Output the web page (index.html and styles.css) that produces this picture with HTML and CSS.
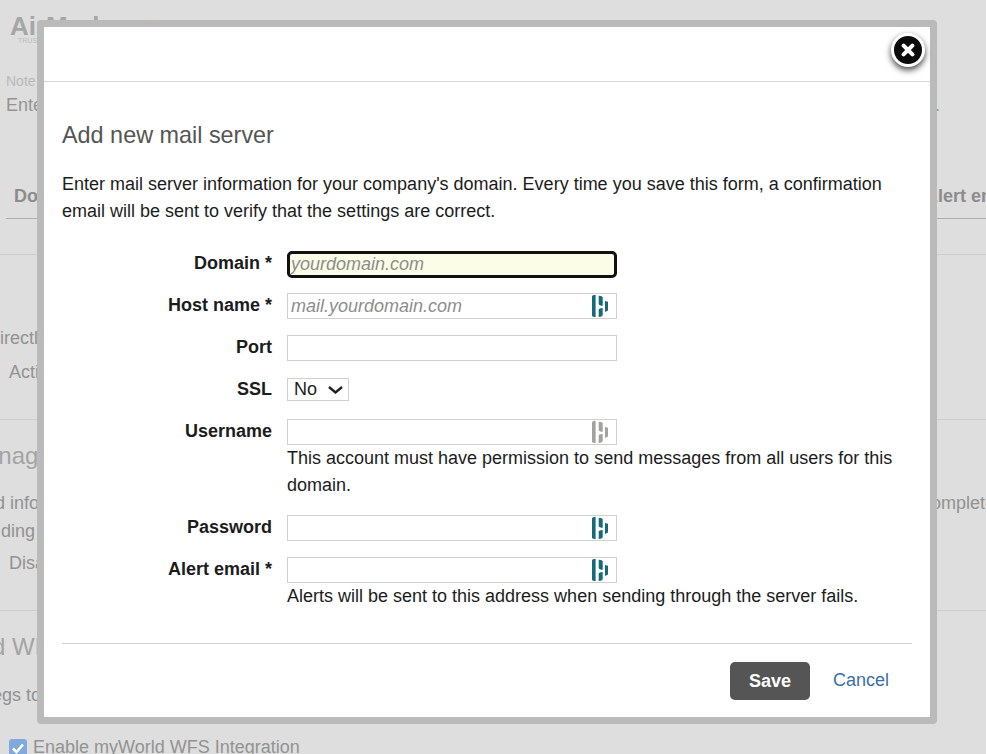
FILE: index.html
```html
<!DOCTYPE html>
<html lang="en">
<head>
<meta charset="utf-8">
<title>Add new mail server</title>
<link rel="stylesheet" href="styles.css">
</head>
<body>
<svg class="defs" width="0" height="0" aria-hidden="true">
  <symbol id="dash" viewBox="0 0 18 24">
    <path d="M2 2.5 C2 1.6 2.7 1 5.6 1 V23 C2.7 23 2 22.4 2 21.5 Z"/>
    <path d="M8.7 1.8 C11.4 2 12.7 2.6 12.7 3.6 V11.8 C10.8 11.8 8.7 11.2 8.7 10 Z"/>
    <path d="M8.7 15 C10 14.4 11.4 14 12.7 14 V21 C12.7 22.2 11.4 22.8 8.7 23 Z"/>
    <path d="M15 7 L18 7.8 V16.6 L15 18 Z"/>
  </symbol>
</svg>

<div class="page">
  <div class="logo"><span class="logo-name">AirMark</span><span class="logo-leaf"></span><div class="logo-sub">TRUSTED</div></div>
  <div class="note">Note</div>
  <p class="intro"><span>Enter the mail servers for your company's domains so that messages are sent through them directly</span><span>.</span></p>
  <div class="table-head"><span>Domain</span><span>Alert email</span></div>
  <div class="rule-head"></div>
  <div class="rule rule-a"></div>
  <p class="direct">directly</p>
  <p class="indent act">Active</p>
  <div class="rule rule-b"></div>
  <h2 class="h-mgmt">Manage</h2>
  <div class="info-row"><span>d info</span><span>complete</span></div>
  <p class="ding">ding</p>
  <p class="indent dis">Disabled</p>
  <div class="rule rule-c"></div>
  <h2 class="h-wfs">d WFS</h2>
  <p class="egs">egs to</p>
  <div class="check-row">
    <span class="checkbox"><svg viewBox="0 0 18 18" width="18" height="18"><path d="M4 9.5 L7.5 13 L14 5.5" fill="none" stroke="#fff" stroke-width="2.6"/></svg></span>
    <span>Enable myWorld WFS Integration</span>
  </div>
</div>

<div class="overlay">
  <div class="dialog" role="dialog" aria-label="Add new mail server">
    <button class="close" type="button" aria-label="Close">
      <svg viewBox="0 0 14 14" width="14" height="14"><path d="M2.6 2.6 L11.4 11.4 M11.4 2.6 L2.6 11.4" stroke="#fff" stroke-width="4" stroke-linecap="round"/></svg>
    </button>
    <div class="dialog-top"></div>
    <div class="dialog-body">
      <h1>Add new mail server</h1>
      <p class="lead">Enter mail server information for your company's domain. Every time you save this form, a confirmation email will be sent to verify that the settings are correct.</p>
      <form class="form">
        <div class="row">
          <label class="lab" for="f-domain">Domain *</label>
          <div class="ctl"><input id="f-domain" class="field field-focus" placeholder="yourdomain.com"></div>
        </div>
        <div class="row">
          <label class="lab" for="f-host">Host name *</label>
          <div class="ctl"><div class="wrap"><input id="f-host" class="field" placeholder="mail.yourdomain.com"><svg class="dash"><use href="#dash"/></svg></div></div>
        </div>
        <div class="row">
          <label class="lab" for="f-port">Port</label>
          <div class="ctl"><input id="f-port" class="field"></div>
        </div>
        <div class="row">
          <label class="lab" for="f-ssl">SSL</label>
          <div class="ctl"><select id="f-ssl" class="sel"><option>No</option><option>Yes</option></select></div>
        </div>
        <div class="row row-help">
          <label class="lab" for="f-user">Username</label>
          <div class="ctl"><div class="wrap"><input id="f-user" class="field"><svg class="dash dash-grey"><use href="#dash"/></svg></div>
            <p class="help">This account must have permission to send messages from all users for this domain.</p></div>
        </div>
        <div class="row">
          <label class="lab" for="f-pass">Password</label>
          <div class="ctl"><div class="wrap"><input id="f-pass" class="field" type="password"><svg class="dash"><use href="#dash"/></svg></div></div>
        </div>
        <div class="row row-help">
          <label class="lab" for="f-alert">Alert email *</label>
          <div class="ctl"><div class="wrap"><input id="f-alert" class="field"><svg class="dash"><use href="#dash"/></svg></div>
            <p class="help">Alerts will be sent to this address when sending through the server fails.</p></div>
        </div>
      </form>
      <div class="actions">
        <button class="save" type="button">Save</button>
        <a class="cancel" href="#">Cancel</a>
      </div>
    </div>
  </div>
</div>
</body>
</html>
```

FILE: styles.css
```css
* { box-sizing: border-box; }
html, body { margin: 0; height: 100%; }
body {
  background: #dedede;
  color: #929292;
  font: 18px/27px "Liberation Sans", Arial, sans-serif;
  overflow: hidden;
}
.defs { display: block; height: 0; }
p, h1, h2 { margin: 0; font-weight: 400; }

/* dimmed page behind the dialog */
.page { height: 754px; overflow: hidden; padding-top: 14px; white-space: nowrap; }
.logo { height: 50px; padding-left: 10px; position: relative; }
.logo-name { font-size: 26px; line-height: 24px; font-weight: 700; color: #a6a6a6; display: block; }
.logo-leaf { position: absolute; left: 143px; top: 3px; width: 12px; height: 6px; border-radius: 6px 6px 0 0; background: #dfdfcc; }
.logo-sub { font-size: 7px; line-height: 8px; color: #bcbcbc; padding-left: 8px; margin-top: -1px; }
.note { margin: 9px 0 0 6px; font-size: 14px; line-height: 16px; color: #b9b9b9; }
.intro { margin: 3px 0 0 6px; width: 934px; height: 27px; display: flex; justify-content: space-between; overflow: hidden; color: #959595; }
.intro span:first-child { width: 800px; overflow: hidden; }
.table-head { margin: 64px 0 0 14px; display: flex; justify-content: space-between; font-weight: 700; width: 1010px; color: #8c8c8c; }
.table-head span:last-child { width: 99px; }
.rule-head { height: 1px; margin: 8px 0 0 6px; background: #aeaeae; }
.rule { height: 1px; background: #cdcdcd; }
.rule-a { margin-top: 35px; }
.direct { margin: 70px 0 0 -10px; }
.indent { margin-left: 9px; }
.act { margin-top: 7px; }
.rule-b { margin-top: 33px; }
h2 { font-size: 24px; line-height: 32px; color: #a4a4a4; }
.h-mgmt { margin: 20px 0 0 -35px; }
.info-row { margin: 18px 0 0 -5px; width: 1052px; display: flex; justify-content: space-between; }
.info-row span:last-child { width: 125px; }
.ding { margin: 1px 0 0 1px; }
.dis { margin-top: 5px; }
.rule-c { margin-top: 33px; }
.h-wfs { margin: 20px 0 0 -8px; }
.egs { margin: 19px 0 0 -8px; }
.check-row { margin-top: 25px; margin-left: 9px; display: flex; align-items: center; gap: 6px; }
.checkbox { width: 18px; height: 18px; border-radius: 3px; background: #80a9dd; display: block; line-height: 0; }

/* modal */
.overlay { position: fixed; inset: 0; }
.dialog {
  position: absolute;
  left: 37px; top: 20px;
  width: 900px; height: 704px;
  background: #fff;
  border: 7px solid #bababa;
  border-radius: 4px;
  color: #1c1c1c;
}
.close {
  position: absolute;
  right: 5px; top: 6px;
  width: 34px; height: 34px;
  padding: 0;
  display: flex; align-items: center; justify-content: center;
  border: 3px solid #fff;
  border-radius: 50%;
  background: #0b0b0b;
  box-shadow: 0 3px 6px 0 #444;
}
.dialog-top { height: 55px; border-bottom: 1px solid #d8d8d8; }
.dialog-body { padding: 0 18px; }
h1 { margin-top: 37px; font-size: 23.4px; line-height: 32px; color: #555; }
.lead { margin-top: 20px; }

.form { margin-top: 26px; display: flex; flex-direction: column; gap: 16px; padding-bottom: 33px; border-bottom: 1px solid #d4d4d4; }
.row { display: flex; gap: 15px; }
.lab { width: 210px; flex: none; text-align: right; font-weight: 700; line-height: 24px; }
.ctl { flex: 1; min-width: 0; }
.wrap { position: relative; width: 330px; }
.field {
  display: block;
  width: 330px; height: 26px;
  padding: 0 3px;
  border: 1px solid #d0d0d0;
  background: #fff;
  font: italic 18px "Liberation Sans", Arial, sans-serif;
  color: #222;
  outline: 0;
}
.field::placeholder { color: #8d8d8d; opacity: 1; }
.field-focus {
  height: 27px;
  margin-bottom: -1px;
  border: 3px solid #111;
  border-radius: 5px;
  padding: 0 1px;
  background: #fbfde6;
}
.dash { position: absolute; right: 9px; top: 1px; width: 18px; height: 24px; fill: #14697b; pointer-events: none; }
.dash-grey { fill: #a3a19e; }
.sel {
  appearance: none;
  display: block;
  width: 62px; height: 23px;
  margin: 1px 0 2px;
  padding: 0 0 1px 6px;
  border: 1px solid #d0d0d0;
  background: #fff url("data:image/svg+xml,%3Csvg xmlns='http://www.w3.org/2000/svg' width='15' height='8'%3E%3Cpath d='M1 1 L7.5 6.5 L14 1' fill='none' stroke='%23222' stroke-width='2.4'/%3E%3C/svg%3E") no-repeat right 5px center;
  color: #1c1c1c;
  border-radius: 0;
  font: 18px "Liberation Sans", Arial, sans-serif;
}
.help { margin-top: 0; width: 620px; }

.actions { margin-top: 18px; padding-right: 23px; display: flex; justify-content: flex-end; align-items: center; gap: 23px; }
.save {
  width: 80px; height: 38px;
  padding: 0;
  border: 0;
  border-radius: 5px;
  background: #555;
  color: #fff;
  font: 700 18px "Liberation Sans", Arial, sans-serif;
}
.cancel { color: #3a6fa8; text-decoration: none; margin-bottom: 2px; }
```
